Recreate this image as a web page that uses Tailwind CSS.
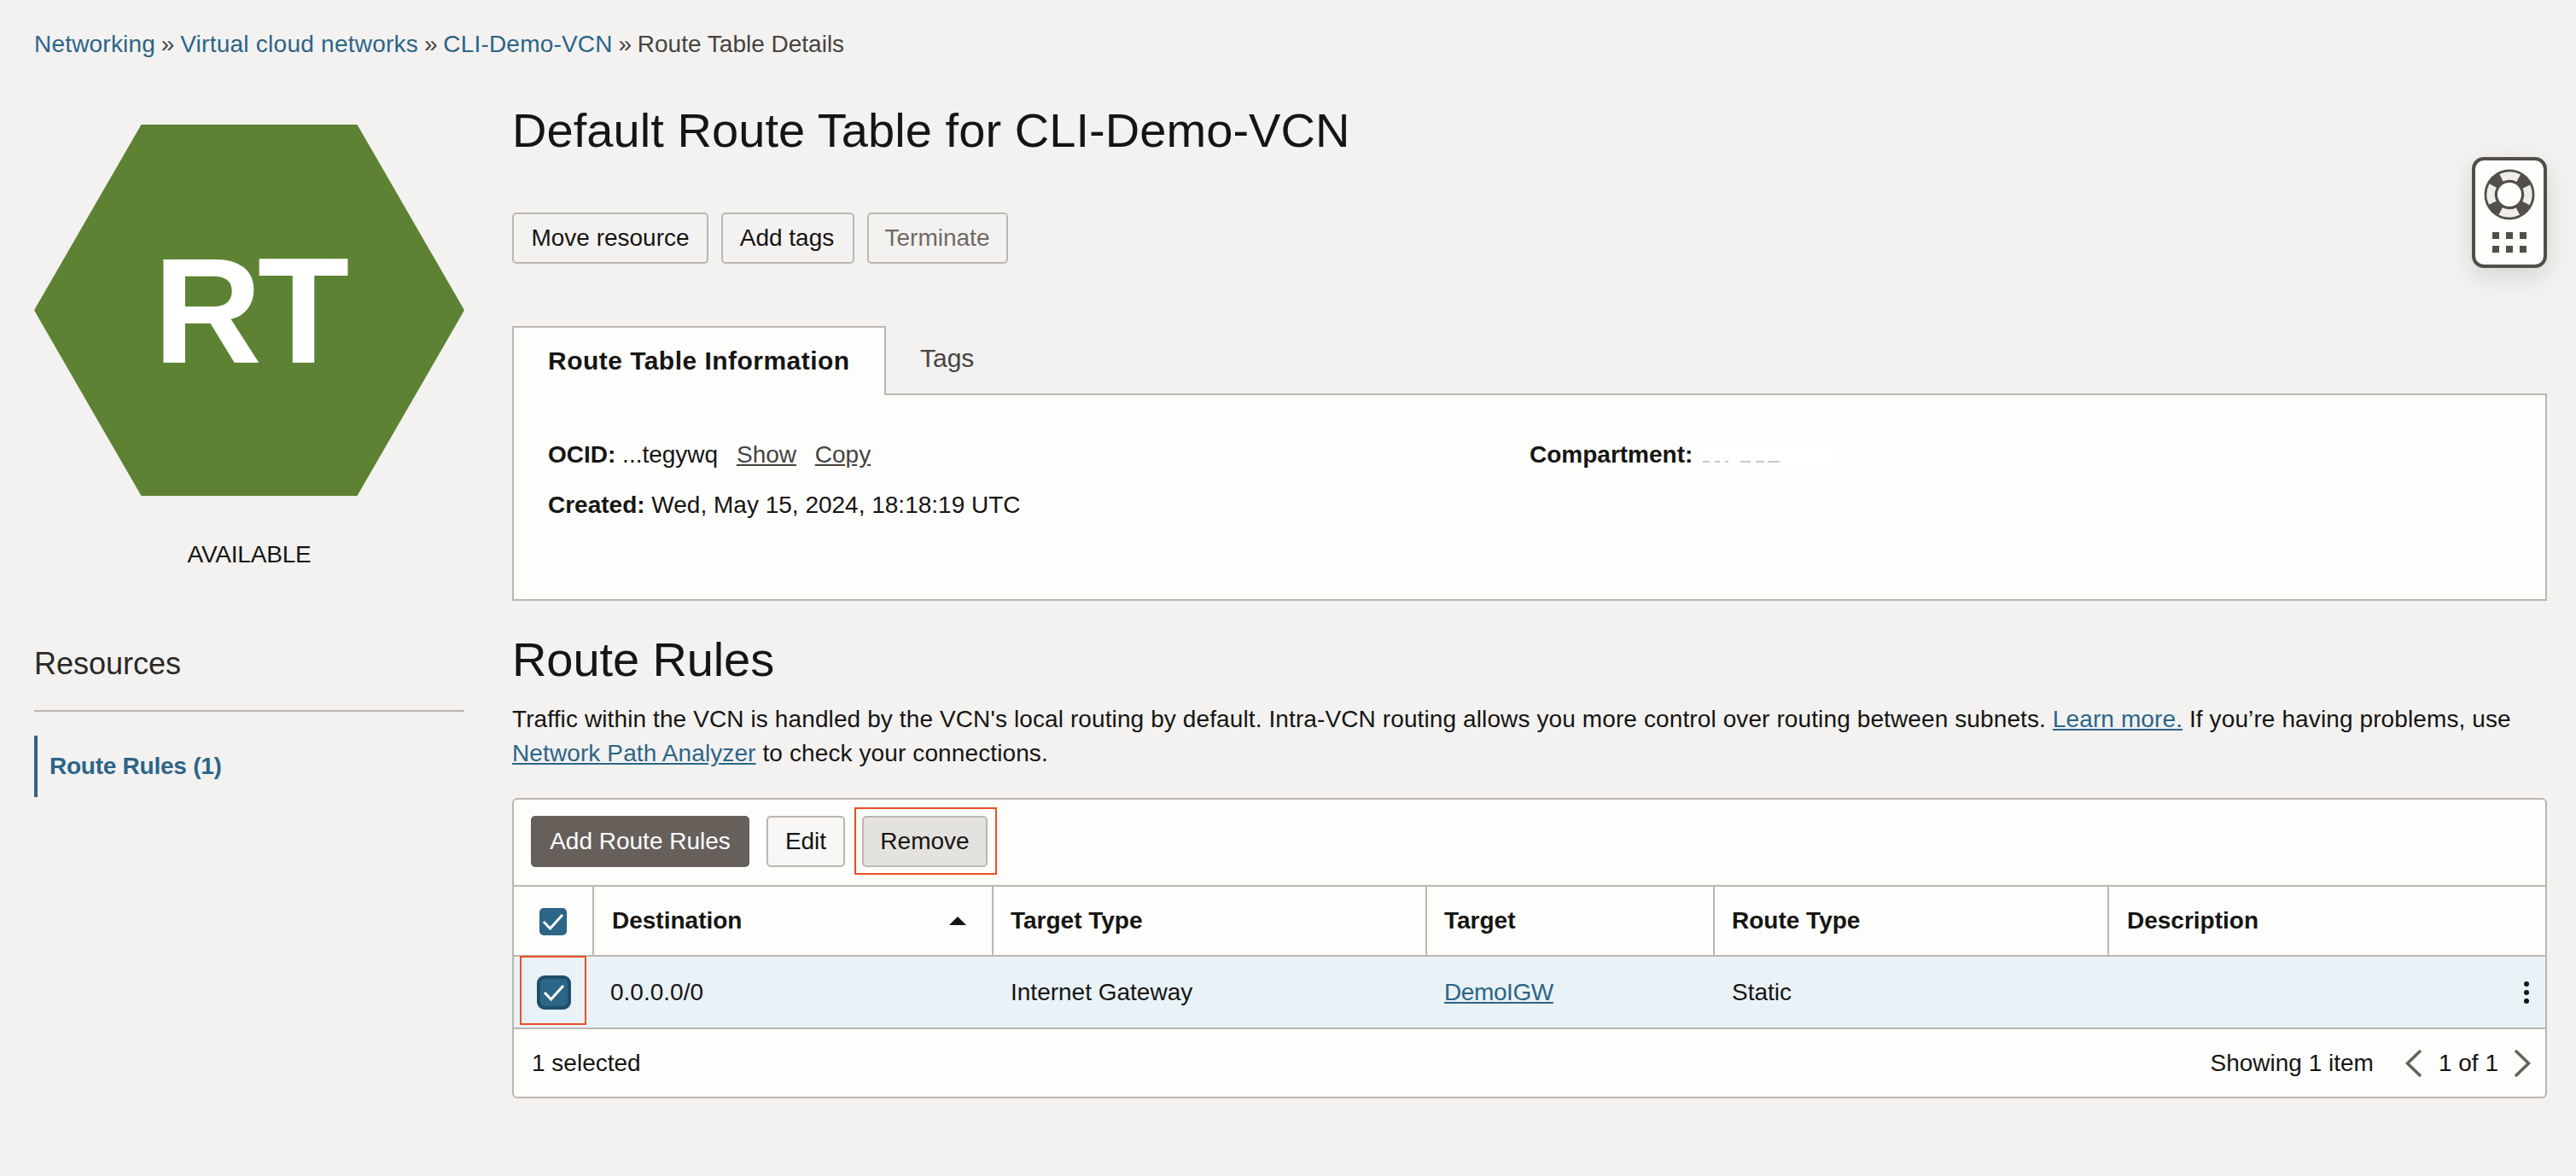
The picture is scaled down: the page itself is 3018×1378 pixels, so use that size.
<!DOCTYPE html>
<html lang="en">
<head>
    <meta charset="UTF-8">
    <title>Route Table Details</title>
    <script src="https://cdn.jsdelivr.net/npm/@tailwindcss/browser@4"></script>
</head>
<body class="relative h-[1378px] overflow-hidden bg-[#f3f2f1] font-['Liberation_Sans',Arial,sans-serif] text-[28px] leading-[40px] text-[#161513]">

    <!-- Breadcrumb -->
    <nav class="pl-[40px] pt-[32px] h-[72px] text-[#47433f]">
        <a class="text-[#2c6587] tracking-[0.2px]">Networking</a> <span class="mx-[-1px]">»</span> <a class="text-[#2c6587] tracking-[0.25px]">Virtual cloud networks</a> <span class="mx-[-1px]">»</span> <a class="text-[#2c6587] tracking-[0.2px]">CLI-Demo-VCN</a> <span class="mx-[-1px]">»</span> Route Table Details
    </nav>

    <div class="flex mt-[48px] pl-[40px] pr-[34px] gap-[56px]">

        <!-- Left column -->
        <aside class="w-[504px] shrink-0 pt-[26px]">
            <div class="w-[504px] h-[435px] bg-[#5d8233] [clip-path:polygon(24.9%_0,75.1%_0,100%_50%,75.1%_100%,24.9%_100%,0_50%)] flex items-center justify-center">
                <span class="text-white font-bold text-[176px] leading-none tracking-[-5px]">RT</span>
            </div>
            <p class="text-center mt-[49px] tracking-[-0.2px]">AVAILABLE</p>
            <h2 class="text-[36px] leading-[48px] mt-[84px] pb-[30px] border-b-2 border-[#bcb6b0] text-[#2b2926]">Resources</h2>
            <div class="mt-[28px] h-[72px] border-l-4 border-[#2c6587] pl-[14px] flex items-center font-bold text-[#2c6587] tracking-[-0.25px]">Route Rules (1)</div>
        </aside>

        <!-- Main column -->
        <main class="flex-1">
            <h1 class="text-[56px] leading-[66px] tracking-[0.06px]">Default Route Table for CLI-Demo-VCN</h1>

            <div class="flex gap-[15px] mt-[63px]">
                <button class="h-[60px] w-[230px] border-2 border-[#bcb6b0] rounded-[5px]">Move resource</button>
                <button class="h-[60px] w-[156px] border-2 border-[#bcb6b0] rounded-[5px] pr-[2px]">Add tags</button>
                <button class="h-[60px] w-[165px] border-2 border-[#bcb6b0] rounded-[5px] text-[#6f6a64] pr-[1px]">Terminate</button>
            </div>

            <!-- Tabs -->
            <div class="flex mt-[73px] h-[79px]">
                <div class="relative z-10 w-[438px] h-[81px] bg-[#fdfdfb] border-2 border-b-0 border-[#bcb6b0] pl-[40px] pt-[19px] font-bold text-[30px] leading-[40px] tracking-[0.47px]">Route Table Information</div>
                <div class="pl-[40px] pt-[18px] text-[30px] leading-[40px] text-[#47433f]">Tags</div>
            </div>
            <div class="h-[243px] bg-[#fdfdfb] border-2 border-[#bcb6b0] pl-[40px] pt-[50px]">
                <div class="flex h-[59px]">
                    <div class="w-[1150px]"><b>OCID:</b> ...tegywq <a class="underline ml-[14px] text-[#47433f]">Show</a> <a class="underline ml-[14px] text-[#47433f]">Copy</a></div>
                    <div class="flex"><b>Compartment:</b>
                        <svg class="ml-[8px] mt-[8px]" width="160" height="26" viewBox="0 0 160 26"><rect width="160" height="26" fill="#ffffff"/><path d="M4 20h8M18 20h6M30 20h4M48 20h12M66 20h10M80 20h14" stroke="#c9c8c6" stroke-width="2"/></svg>
                    </div>
                </div>
                <div><b>Created:</b> Wed, May 15, 2024, 18:18:19 UTC</div>
            </div>

            <h2 class="text-[56px] leading-[66px] mt-[36px] tracking-[-0.1px]">Route Rules</h2>
            <p class="mt-[17px] tracking-[0.11px]">Traffic within the VCN is handled by the VCN's local routing by default. Intra-VCN routing allows you more control over routing between subnets. <a class="underline text-[#2c6587]">Learn more.</a> If you’re having problems, use <a class="underline text-[#2c6587]">Network Path Analyzer</a> to check your connections.</p>

            <!-- Route rules table -->
            <section class="mt-[32px] h-[352px] bg-[#fdfdfb] border-2 border-[#bcb6b0] rounded-[6px]">
                <div class="h-[102px] border-b-2 border-[#bcb6b0] pl-[20px] pt-[19px] flex items-start">
                    <button class="h-[60px] w-[256px] rounded-[5px] bg-[#665f5a] text-white">Add Route Rules</button>
                    <button class="h-[60px] w-[92px] ml-[20px] border-2 border-[#bcb6b0] rounded-[5px] bg-[#f8f7f6]">Edit</button>
                    <div class="relative ml-[20px]">
                        <button class="h-[60px] w-[147px] border-2 border-[#bcb6b0] rounded-[5px] bg-[#e3e2de]">Remove</button>
                        <div class="absolute left-[-9px] right-[-11px] top-[-10px] bottom-[-9px] border-2 border-[#f04e23]"></div>
                    </div>
                </div>

                <div class="grid grid-cols-[94px_468px_508px_337px_462px_1fr] h-[82px] border-b-2 border-[#bcb6b0] font-bold">
                    <div class="border-r-2 border-[#bcb6b0] flex items-center justify-center pt-[2px]">
                        <span class="w-[32px] h-[32px] rounded-[5px] bg-[#2c6587]">
                            <svg width="32" height="32" viewBox="0 0 32 32" fill="none" stroke="#fff" stroke-width="3"><path d="M5 16l7.5 8L27 8"/></svg>
                        </span>
                    </div>
                    <div class="border-r-2 border-[#bcb6b0] pl-[21px] pr-[30px] flex items-center justify-between">Destination
                        <svg width="20" height="10" viewBox="0 0 20 10"><path d="M10 0l10 10H0z" fill="#161513"/></svg>
                    </div>
                    <div class="border-r-2 border-[#bcb6b0] pl-[20px] flex items-center">Target Type</div>
                    <div class="border-r-2 border-[#bcb6b0] pl-[20px] flex items-center">Target</div>
                    <div class="border-r-2 border-[#bcb6b0] pl-[20px] flex items-center">Route Type</div>
                    <div class="pl-[21px] flex items-center">Description</div>
                </div>

                <div class="grid grid-cols-[94px_468px_508px_337px_462px_1fr] h-[85px] border-b-2 border-[#bcb6b0] bg-[#e9f2f6]">
                    <div class="relative flex items-center justify-center">
                        <span class="w-[40px] h-[40px] rounded-[9px] bg-[#2c6587] border-[4px] border-[#1f4e6b]">
                            <svg width="32" height="32" viewBox="0 0 32 32" fill="none" stroke="#fff" stroke-width="3"><path d="M5 16l7.5 8L27 8"/></svg>
                        </span>
                        <div class="absolute left-[7px] top-[-1px] w-[78px] h-[81px] border-2 border-[#f04e23]"></div>
                    </div>
                    <div class="pl-[19px] flex items-center">0.0.0.0/0</div>
                    <div class="pl-[20px] flex items-center">Internet Gateway</div>
                    <div class="pl-[20px] flex items-center"><a class="underline text-[#2c6587] tracking-[-0.4px]">DemoIGW</a></div>
                    <div class="pl-[20px] flex items-center">Static</div>
                    <div class="flex items-center justify-end pr-[19px]">
                        <svg width="6" height="26" viewBox="0 0 6 26" fill="#161513"><circle cx="3" cy="3" r="3"/><circle cx="3" cy="13" r="3"/><circle cx="3" cy="23" r="3"/></svg>
                    </div>
                </div>

                <div class="h-[79px] pl-[21px] pr-[17px] flex items-center justify-between">
                    <span>1 selected</span>
                    <div class="flex items-center">
                        <span>Showing 1 item</span>
                        <svg class="ml-[37px]" width="20" height="32" viewBox="0 0 20 32" fill="none" stroke="#665f5a" stroke-width="3.5"><path d="M18 1L2.5 16 18 31"/></svg>
                        <span class="ml-[19px]">1 of 1</span>
                        <svg class="ml-[18px]" width="20" height="32" viewBox="0 0 20 32" fill="none" stroke="#665f5a" stroke-width="3.5"><path d="M2 1l15.5 15L2 31"/></svg>
                    </div>
                </div>
            </section>
        </main>
    </div>

    <!-- Floating help widget -->
    <div class="absolute left-[2896px] top-[184px] w-[88px] h-[130px] rounded-[14px] border-[4px] border-[#524f49] bg-[#fdfdfb] shadow-[0_10px_30px_rgba(0,0,0,0.12)] flex flex-col items-center">
        <svg class="mt-[10px]" width="60" height="60" viewBox="-30 -30 60 60">
            <circle r="29.5" fill="#524f49"/>
            <circle r="22" fill="none" stroke="#eeedeb" stroke-width="9.5" stroke-dasharray="21 13.55" stroke-dashoffset="10.5"/>
            <circle r="14" fill="#fdfdfb"/>
        </svg>
        <div class="grid grid-cols-3 gap-[8px] mt-[14px]">
            <span class="w-[8px] h-[8px] bg-[#524f49]"></span><span class="w-[8px] h-[8px] bg-[#524f49]"></span><span class="w-[8px] h-[8px] bg-[#524f49]"></span>
            <span class="w-[8px] h-[8px] bg-[#524f49]"></span><span class="w-[8px] h-[8px] bg-[#524f49]"></span><span class="w-[8px] h-[8px] bg-[#524f49]"></span>
        </div>
    </div>
</body>
</html>
